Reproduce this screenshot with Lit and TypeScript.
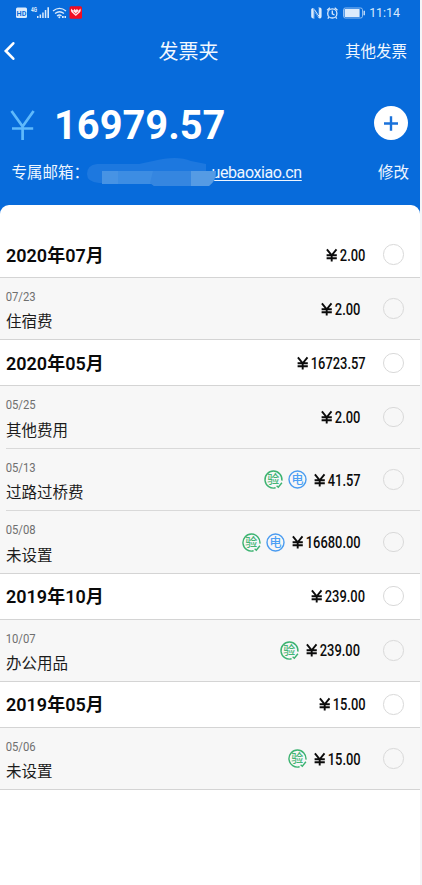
import { LitElement, html, svg, css, nothing } from "lit";
import { customElement, property } from "lit/decorators.js";

type Item = { date: string; name: string; amount: string; tags?: string[] };
type Group = { month: string; total: string; items: Item[] };

const GROUPS: Group[] = [
  { month: "2020年07月", total: "2.00", items: [{ date: "07/23", name: "住宿费", amount: "2.00" }] },
  {
    month: "2020年05月",
    total: "16723.57",
    items: [
      { date: "05/25", name: "其他费用", amount: "2.00" },
      { date: "05/13", name: "过路过桥费", amount: "41.57", tags: ["验", "电"] },
      { date: "05/08", name: "未设置", amount: "16680.00", tags: ["验", "电"] },
    ],
  },
  { month: "2019年10月", total: "239.00", items: [{ date: "10/07", name: "办公用品", amount: "239.00", tags: ["验"] }] },
  { month: "2019年05月", total: "15.00", items: [{ date: "05/06", name: "未设置", amount: "15.00", tags: ["验"] }] },
];

/** Currency amount set in condensed figures. */
@customElement("money-text")
class MoneyText extends LitElement {
  @property() value = "";
  static styles = css`
    :host { display: block; height: 20px; }
    svg { display: block; overflow: visible; }
    text { font: 500 16px Roboto, sans-serif; fill: #0b0b0b; }
    path { fill: none; stroke: #0b0b0b; stroke-width: 1.9; }
  `;
  render() {
    const figures = (this.value.length - 1) * 7.3 + 3.7;
    const w = figures + 14;
    return html`<svg width=${w} height="20" viewBox="0 -2 ${w} 20">
      <path d="M0.9 2.3L5.7 8.3L10.5 2.3M5.7 8V14.4M0.6 8.2H10.8M0.6 11.2H10.8" />
      ${svg`<text x="13.8" y="14.2" textLength=${figures} lengthAdjust="spacingAndGlyphs">${this.value}</text>`}
    </svg>`;
  }
}

/** Round one-character stamp: verified (green) or electronic (blue). */
@customElement("stamp-tag")
class StampTag extends LitElement {
  @property() label = "";
  static styles = css`
    :host { display: block; width: 19px; height: 19px; }
    svg { display: block; overflow: visible; }
    .ring { fill: none; stroke-width: 1.4; }
    .green { stroke: #3cb371; }
    .blue { stroke: #4a9bf0; }
    text { font: 500 12px "Noto Sans CJK SC", sans-serif; text-anchor: middle; }
    .tg { fill: #43b576; }
    .tb { fill: #4c9ff5; }
  `;
  render() {
    return this.label === "验"
      ? html`<svg width="19" height="19" viewBox="0 0 19 19">
          <path class="ring green" d="M11.6 17.8A8.5 8.5 0 1 1 17.9 10.6" />
          <path class="ring green" d="M12.6 15.8L14.3 17.2L17.9 12.8" />
          <text class="tg" x="9.3" y="13.6">验</text>
        </svg>`
      : html`<svg width="19" height="19" viewBox="0 0 19 19">
          <circle class="ring blue" cx="9.5" cy="9.5" r="8.5" />
          <text class="tb" x="9.5" y="13.9">电</text>
        </svg>`;
  }
}

@customElement("app-root")
class AppRoot extends LitElement {
  static styles = css`
    :host {
      display: block; width: 422px; height: 885px; overflow: hidden; box-sizing: border-box;
      padding-right: 2px; background: #f4f5f7; color: #111;
      font-family: Roboto, "Noto Sans CJK SC", sans-serif;
    }
    * { box-sizing: border-box; }
    svg { display: block; flex: none; overflow: visible; }
    .screen { height: 885px; background: #076bdb; display: flex; flex-direction: column; }
    .status { height: 26px; padding: 0 20px 0 15px; display: flex; align-items: center; justify-content: space-between; color: #d9e9fb; }
    .status-end { display: flex; align-items: center; gap: 3px; font-size: 12.4px; line-height: 14px; }
    .nav { height: 52px; display: grid; grid-template-columns: 154.5px auto 1fr; align-items: center; padding: 0 13px 0 4px; color: #f2f8ff; }
    .title { font-size: 20px; line-height: 28px; }
    .other { font-size: 15.5px; line-height: 22px; justify-self: end; }
    .sum { height: 92px; display: flex; align-items: center; padding: 0 12px 0 10px; }
    .total { font-size: 39.8px; line-height: 44px; font-weight: 700; color: #fff; margin-left: 18px; flex: 1; padding-top: 3px; }
    .plus { margin-top: -2px; }
    .mail { height: 34px; display: flex; align-items: center; padding: 0 11px 0 11.5px; color: #eef6ff; font-size: 15.5px; line-height: 22px; margin-top: -14.5px; }
    .mask { margin-left: -2.5px; margin-right: -5px; z-index: 1; }
    .link { flex: 1; font-size: 16px; letter-spacing: -0.4px; }
    .link span { text-decoration: underline; text-underline-offset: 2px; text-decoration-thickness: 1px; }
    .panel { flex: 1; background: #fff; border-radius: 9px 9px 0 0; margin-top: 15px; padding-top: 27.7px; }
    .head { height: 45.8px; display: flex; align-items: center; padding: 0 16.5px 0 6px; border-bottom: 1px solid #d4d4d4; }
    .month { flex: 1; font-size: 18px; line-height: 24px; font-weight: 600; color: #0a0a0a; padding-top: 2px; }
    .group { background: #f7f7f7; border-bottom: 1px solid #d4d4d4; }
    .row { height: 62.5px; margin-left: 6px; padding-right: 16.5px; display: flex; align-items: center; border-bottom: 1px solid #d9d9d9; }
    .row:last-child { border-bottom: none; height: 61.5px; }
    .info { flex: 1; padding-top: 5px; }
    .name { font-size: 15.5px; line-height: 22px; margin-top: 6.5px; color: #1c1c1c; }
    .date { font-family: Roboto, sans-serif; font-size: 13px; fill: #6f6f6f; }
    .tags { display: flex; gap: 4.5px; margin-right: 7px; }
    .pick { width: 20.5px; height: 20.5px; border-radius: 50%; border: 1.7px solid #d9d9d9; flex: none; }
    .head .pick { margin-left: 17.5px; }
    .row .pick { margin-left: 22.5px; }
    .s { fill: none; stroke: #d9e9fb; stroke-width: 1.3; }
    .f { fill: #dcebfc; }
    .tiny { font: 700 7px Roboto, sans-serif; fill: #dcebfc; }
    .hd { font: 700 8px Roboto, sans-serif; fill: #076bdb; }
  `;

  private statusLeft() {
    return html`<svg width="68" height="16" viewBox="0 0 68 16">
      <rect class="f" x="1" y="2.5" width="11" height="10.5" rx="1.5" />
      <text class="hd" x="1.6" y="10.7" textLength="9.8" lengthAdjust="spacingAndGlyphs">HD</text>
      <text class="tiny" x="16" y="6.7" textLength="6" lengthAdjust="spacingAndGlyphs">4G</text>
      <path class="f" d="M22 11h1.5v2H22zM24.6 9.5h1.5V13h-1.5zM27.2 7.5h1.5V13h-1.5zM29.8 5h1.5v8h-1.5zM32.4 2.2h1.6V13h-1.6z" />
      <path class="s" d="M38 6Q44.5 .8 51 6M40 8.5Q44.5 5 49 8.5M42 11Q44.5 9 46.5 11" />
      <circle class="f" cx="44.3" cy="12.3" r="1" />
      <path class="f" d="M47 11h1.7v2H47zM49.5 11h1.5v2h-1.5z" />
      <rect x="54.5" y="1.3" width="12.5" height="12.5" rx="1.5" fill="#f20d22" />
      <path d="M56.2 3.6Q55.4 5.4 56.4 7L60.8 10.9L65.2 7Q66.2 5.4 65.4 3.6L63.4 5.8L62 3.8L60.8 5.2L59.6 3.8L58.2 5.8Z" fill="#ffe9ea" />
      <path d="M58.3 6.6L60.8 8.8L63.3 6.6" fill="none" stroke="#f20d22" stroke-width="0.8" />
    </svg>`;
  }

  private statusRight() {
    return html`<svg width="56" height="16" viewBox="0 0 56 16">
      <path d="M1.8 3.4Q3 2.4 4.2 3.4L8.2 9.6V2.6H9.8Q11.6 2.6 11.6 4.4V11.6Q11.6 13.4 10.2 13.4Q8.8 13.4 8 12.2L4.6 7V13.4H3Q1.2 13.4 1.2 11.6V4.4Q1.2 3.8 1.8 3.4Z" fill="#dcebfc" />
      <path d="M4 3V5.4L8.6 12.2M4.2 6V13.4M8.6 2.6V10" fill="none" stroke="#076bdb" stroke-width="0.8" />
      <circle class="s" cx="22.3" cy="8.4" r="4.6" />
      <path class="s" d="M22.3 5.5V8.8L24.5 10M17.1 5.2L19.9 2.8M27.5 5.2L24.7 2.8M18.9 12.2L17.8 13.7M25.7 12.2L26.8 13.7" />
      <rect x="33.5" y="3" width="19" height="10" rx="1.8" fill="none" stroke="#8fbef2" />
      <rect class="f" x="34.6" y="4" width="15" height="8" rx="0.6" />
      <path d="M54.2 5.7V10.3" stroke="#dcebfc" stroke-width="1.3" />
    </svg>`;
  }

  private row(i: Item) {
    return html`<div class="row">
      <div class="info">
        <svg width="32" height="16" viewBox="0 0 32 16">
          <text class="date" x="-0.3" y="12" textLength="30" lengthAdjust="spacingAndGlyphs">${i.date}</text>
        </svg>
        <div class="name">${i.name}</div>
      </div>
      ${i.tags ? html`<div class="tags">${i.tags.map((t) => html`<stamp-tag .label=${t}></stamp-tag>`)}</div>` : nothing}
      <money-text .value=${i.amount}></money-text>
      <div class="pick"></div>
    </div>`;
  }

  render() {
    return html`<div class="screen">
      <div class="status">
        ${this.statusLeft()}
        <div class="status-end">${this.statusRight()}<span>11:14</span></div>
      </div>
      <div class="nav">
        <svg width="12" height="20" viewBox="0 0 12 20">
          <path d="M9.3 1.3L1.8 9L9.3 16.7" fill="none" stroke="#fff" stroke-width="2.6" stroke-linecap="round" />
        </svg>
        <div class="title">发票夹</div>
        <div class="other">其他发票</div>
      </div>
      <div class="sum">
        <svg width="26" height="32" viewBox="0 0 26 32">
          <path d="M1.5 3L12.6 18.5L23.6 3M12.6 18V32M2 20.5H23.2" fill="none" stroke="#5fb9fb" stroke-width="2.7" />
        </svg>
        <div class="total">16979.57</div>
        <svg class="plus" width="34" height="34" viewBox="0 0 34 34">
          <circle cx="17" cy="17" r="17" fill="#fff" />
          <path d="M17 10.2V24.8M10 17.5H24" stroke="#1a72da" stroke-width="2.4" />
        </svg>
      </div>
      <div class="mail">
        <span>专属邮箱：</span>
        <svg class="mask" width="130" height="30" viewBox="0 0 130 30">
          <path d="M0 16Q0 7 10 6H52L66 3Q90 -3 104 3L119 6V13H129V16Q129 23 122 28H67L63 25H12Q0 24 0 16Z" fill="#1d78df" />
          <path d="M15 13H66V26H15Z" fill="#3d8de3" />
          <path d="M15 13H31V26H15Z" fill="#4793e4" />
          <path d="M66 13H104V28H67L63 25Z" fill="#3586e0" />
          <path d="M104 13H129Q129 23 122 28H104Z" fill="#559be4" />
        </svg>
        <div class="link"><span>uebaoxiao.cn</span></div>
        <span>修改</span>
      </div>
      <div class="panel">
        ${GROUPS.map(
          (g) => html`<div class="head">
              <div class="month">${g.month}</div>
              <money-text .value=${g.total}></money-text>
              <div class="pick"></div>
            </div>
            <div class="group">${g.items.map((i) => this.row(i))}</div>`
        )}
      </div>
    </div>`;
  }
}
